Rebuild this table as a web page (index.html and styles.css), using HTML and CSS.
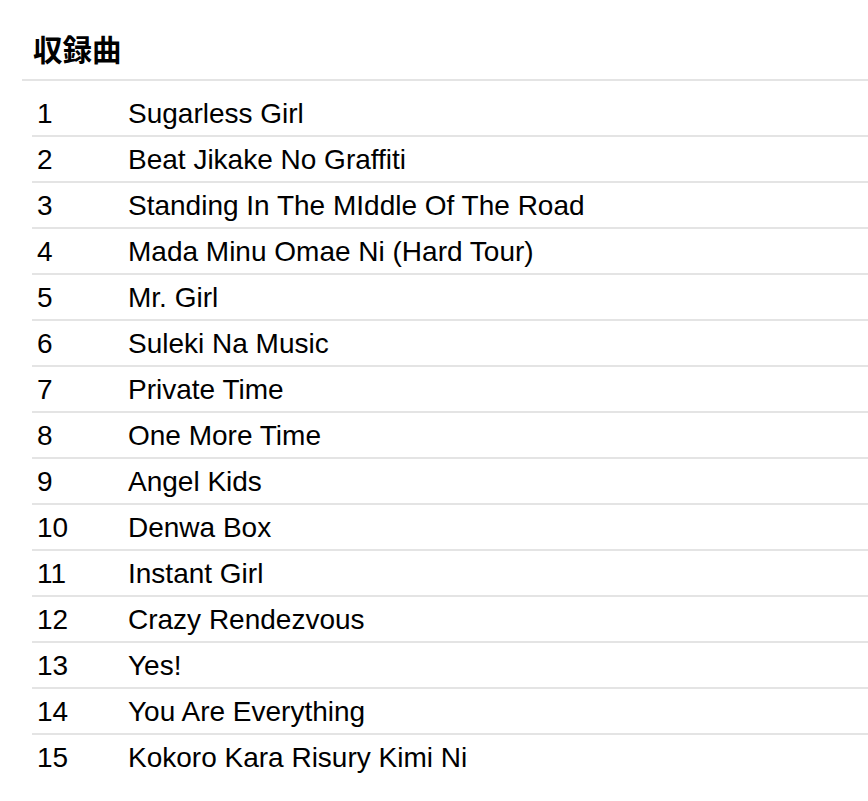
FILE: index.html
```html
<!DOCTYPE html>
<html lang="ja">
<head>
<meta charset="utf-8">
<link rel="stylesheet" href="styles.css">
</head>
<body>
<section class="tracks">
  <h2 class="tracks-title">収録曲</h2>
  <table class="track-table">
    <tbody>
      <tr><td class="num">1</td><td class="title">Sugarless Girl</td></tr>
      <tr><td class="num">2</td><td class="title">Beat Jikake No Graffiti</td></tr>
      <tr><td class="num">3</td><td class="title">Standing In The MIddle Of The Road</td></tr>
      <tr><td class="num">4</td><td class="title">Mada Minu Omae Ni (Hard Tour)</td></tr>
      <tr><td class="num">5</td><td class="title">Mr. Girl</td></tr>
      <tr><td class="num">6</td><td class="title">Suleki Na Music</td></tr>
      <tr><td class="num">7</td><td class="title">Private Time</td></tr>
      <tr><td class="num">8</td><td class="title">One More Time</td></tr>
      <tr><td class="num">9</td><td class="title">Angel Kids</td></tr>
      <tr><td class="num">10</td><td class="title">Denwa Box</td></tr>
      <tr><td class="num">11</td><td class="title">Instant Girl</td></tr>
      <tr><td class="num">12</td><td class="title">Crazy Rendezvous</td></tr>
      <tr><td class="num">13</td><td class="title">Yes!</td></tr>
      <tr><td class="num">14</td><td class="title">You Are Everything</td></tr>
      <tr><td class="num">15</td><td class="title">Kokoro Kara Risury Kimi Ni</td></tr>
    </tbody>
  </table>
</section>
</body>
</html>
```
FILE: styles.css
```css
html, body {
  margin: 0;
  padding: 0;
  background: #ffffff;
}
body {
  font-family: "Liberation Sans", Arial, "Noto Sans CJK JP", sans-serif;
  color: #000000;
}
.tracks {
  padding: 31px 0 0 22px;
}
.tracks-title {
  margin: 0;
  padding: 0 0 9px 11px;
  font-family: "Liberation Sans", "Noto Sans CJK JP", sans-serif;
  font-weight: bold;
  font-size: 29.5px;
  line-height: 39px;
  border-bottom: 2px solid #e4e4e4;
}
.track-table {
  margin: 10px 0 0 10px;
  width: calc(100% - 10px);
  border-collapse: collapse;
  font-size: 28px;
}
.track-table tr + tr {
  border-top: 2px solid #e4e4e4;
}
.track-table td {
  height: 42px;
  padding: 2px 0 0 0;
  line-height: 42px;
  vertical-align: middle;
}
.num {
  width: 96px;
  padding-left: 5px !important;
  box-sizing: border-box;
}
```
